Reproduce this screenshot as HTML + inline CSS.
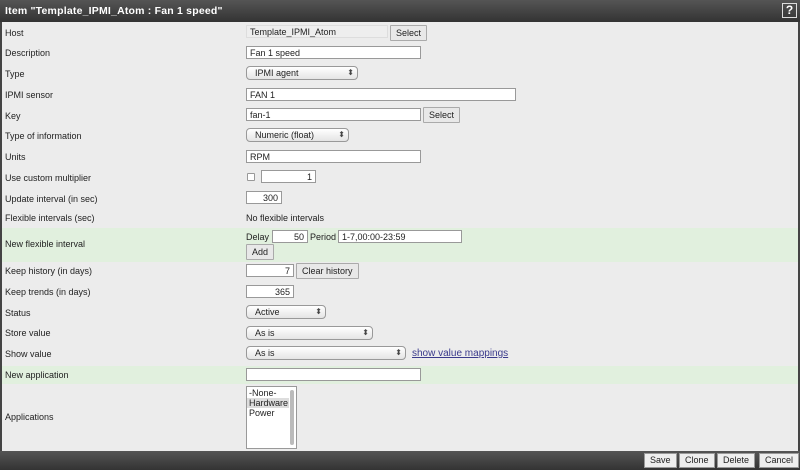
<!DOCTYPE html>
<html><head><meta charset="utf-8"><style>
*{box-sizing:border-box;margin:0;padding:0}
body{width:800px;height:474px;background:#fff;font-family:"Liberation Sans",sans-serif;font-size:9px;color:#222;position:relative;overflow:hidden}
.a{position:absolute}
#bg{left:0;top:0;width:800px;height:451px;background:#ececec;border-left:2px solid #444;border-right:2px solid #444}
#hd{left:0;top:0;width:800px;height:22px;background:linear-gradient(#555,#333);color:#fff;font-weight:bold;font-size:10.5px;padding:5px 5px;letter-spacing:0.2px}
#help{left:782px;top:3px;width:15px;height:15px;border:1px solid #ddd;color:#fff;font-weight:bold;font-size:12px;text-align:center;line-height:13px}
.g{left:2px;width:796px;background:#e1f0de}
.l{left:5px}
.i{background:#fff;border:1px solid #999;height:13px;padding:1px 3px;line-height:10px;font-size:9px}
.r{text-align:right}
.b{background:#e8e8e8;border:1px solid #aaa;height:16px;padding:0 5px;line-height:14px;font-size:9px;border-radius:1px}
.s{background:linear-gradient(#fff,#e4e4e4);border:1px solid #999;border-radius:4px;height:14px;padding:0 8px;line-height:12px}
.s:after{content:"⬍";position:absolute;right:3px;top:0;font-size:8px;color:#444}
#ft{left:0;top:451px;width:800px;height:19px;background:linear-gradient(#555,#333)}
.fb{top:453px;background:#eee;border:1px solid #999;height:15px;line-height:13px;padding:0 5px;font-size:9px}
</style></head><body>
<div class="a" id="bg"></div>
<div class="a" id="hd">Item "Template_IPMI_Atom : Fan 1 speed"</div>
<div class="a" id="help">?</div>
<div class="a g" style="top:228px;height:34px"></div>
<div class="a g" style="top:366px;height:18px"></div>

<div class="a l" style="top:28px">Host</div>
<div class="a i" style="left:246px;top:25px;width:142px;background:#eee;border-color:#ddd">Template_IPMI_Atom</div>
<div class="a b" style="left:390px;top:25px">Select</div>

<div class="a l" style="top:48px">Description</div>
<div class="a i" style="left:246px;top:46px;width:175px">Fan 1 speed</div>

<div class="a l" style="top:69px">Type</div>
<div class="a s" style="left:246px;top:66px;width:112px">IPMI agent</div>

<div class="a l" style="top:90px">IPMI sensor</div>
<div class="a i" style="left:246px;top:88px;width:270px">FAN 1</div>

<div class="a l" style="top:111px">Key</div>
<div class="a i" style="left:246px;top:108px;width:175px">fan-1</div>
<div class="a b" style="left:423px;top:107px">Select</div>

<div class="a l" style="top:131px">Type of information</div>
<div class="a s" style="left:246px;top:128px;width:103px">Numeric (float)</div>

<div class="a l" style="top:152px">Units</div>
<div class="a i" style="left:246px;top:150px;width:175px">RPM</div>

<div class="a l" style="top:173px">Use custom multiplier</div>
<div class="a" style="left:247px;top:173px;width:8px;height:8px;border:1px solid #999;background:#fff;border-radius:1px"></div>
<div class="a i r" style="left:261px;top:170px;width:55px">1</div>

<div class="a l" style="top:194px">Update interval (in sec)</div>
<div class="a i r" style="left:246px;top:191px;width:36px">300</div>

<div class="a l" style="top:213px">Flexible intervals (sec)</div>
<div class="a" style="left:246px;top:213px">No flexible intervals</div>

<div class="a l" style="top:239px">New flexible interval</div>
<div class="a" style="left:246px;top:232px">Delay</div>
<div class="a i r" style="left:272px;top:230px;width:36px">50</div>
<div class="a" style="left:310px;top:232px">Period</div>
<div class="a i" style="left:338px;top:230px;width:124px">1-7,00:00-23:59</div>
<div class="a b" style="left:246px;top:244px">Add</div>

<div class="a l" style="top:266px">Keep history (in days)</div>
<div class="a i r" style="left:246px;top:264px;width:48px">7</div>
<div class="a b" style="left:296px;top:263px">Clear history</div>

<div class="a l" style="top:287px">Keep trends (in days)</div>
<div class="a i r" style="left:246px;top:285px;width:48px">365</div>

<div class="a l" style="top:308px">Status</div>
<div class="a s" style="left:246px;top:305px;width:80px">Active</div>

<div class="a l" style="top:328px">Store value</div>
<div class="a s" style="left:246px;top:326px;width:127px">As is</div>

<div class="a l" style="top:349px">Show value</div>
<div class="a s" style="left:246px;top:346px;width:160px">As is</div>
<div class="a" style="left:412px;top:348px;color:#3a3a8c;text-decoration:underline;font-size:10px">show value mappings</div>

<div class="a l" style="top:370px">New application</div>
<div class="a i" style="left:246px;top:368px;width:175px"></div>

<div class="a l" style="top:412px">Applications</div>
<div class="a" style="left:246px;top:386px;width:51px;height:63px;background:#fff;border:1px solid #999;font-size:9px;line-height:10px;padding-top:1px">
<div style="padding-left:2px">-None-</div>
<div style="background:#ddd;width:42px;padding-left:2px">Hardware</div>
<div style="padding-left:2px">Power</div>
<div style="position:absolute;right:2px;top:3px;width:4px;height:55px;background:#bbb;border-radius:2px"></div>
</div>

<div class="a" id="ft"></div>
<div class="a fb" style="left:644px">Save</div>
<div class="a fb" style="left:679px">Clone</div>
<div class="a fb" style="left:717px">Delete</div>
<div class="a fb" style="left:759px">Cancel</div>
</body></html>
